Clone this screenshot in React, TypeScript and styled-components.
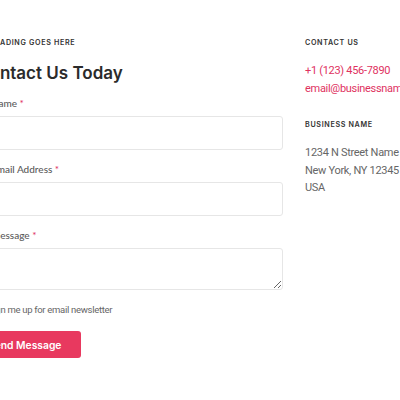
import React from "react";
import styled, { createGlobalStyle } from "styled-components";

const Global = createGlobalStyle`
  html, body { margin: 0; padding: 0; background: #fff; }
  body { font-family: "Lato", "Open Sans", sans-serif; overflow: hidden; }
  * { box-sizing: border-box; }
`;

const bodyFont = `"Roboto", "Lato", sans-serif`;
const headFont = `"Inter", "DejaVu Sans", sans-serif`;

const Page = styled.div`
  display: flex;
  gap: 22px;
  width: 460px;
  margin-left: -11px;
  padding-top: 38px;
`;

const FormColumn = styled.div`
  width: 294px;
  flex-shrink: 0;
  display: flex;
  flex-direction: column;
`;

const SideColumn = styled.div`
  flex: 1;
  display: flex;
  flex-direction: column;
`;

const Eyebrow = styled.div`
  font-family: ${headFont};
  font-size: 7.2px;
  font-weight: 600;
  letter-spacing: 0.65px;
  text-transform: uppercase;
  color: #333;
  line-height: 10px;
`;

const Title = styled.h1`
  margin: 13px 0 0 -12px;
  font-family: ${headFont};
  font-size: 17px;
  font-weight: 600;
  color: #2b2b2b;
  line-height: 24px;
`;

const Field = styled.div<{ $top: number }>`
  display: flex;
  flex-direction: column;
  gap: 7px;
  margin-top: ${(p) => p.$top}px;
`;

const Label = styled.label`
  font-family: "Lato", sans-serif;
  font-size: 10px;
  font-weight: 500;
  color: #5a5a5a;
  line-height: 12px;
  padding-left: 2px;
`;

const Star = styled.span`
  color: #e0325f;
`;

const Input = styled.input`
  height: 34px;
  border: 1px solid #e6e6e6;
  border-radius: 3px;
  background: #fff;
  outline: none;
`;

const TextArea = styled.textarea`
  height: 42px;
  border: 1px solid #e6e6e6;
  border-radius: 3px;
  resize: vertical;
  outline: none;
`;

const CheckRow = styled.label`
  display: flex;
  align-items: center;
  gap: 5px;
  margin: 13px 0 0 -17px;
  font-family: ${bodyFont};
  font-size: 9.5px;
  letter-spacing: -0.3px;
  color: #666;
  line-height: 14px;
`;

const Box = styled.input`
  margin: 0;
  width: 11px;
  height: 11px;
`;

const Button = styled.button`
  align-self: flex-start;
  margin: 14px 0 0 -22px;
  height: 27px;
  padding: 0 20px 0 21px;
  border: none;
  border-radius: 3px;
  background: #e8395f;
  color: #fff;
  font-family: ${headFont};
  font-size: 10.3px;
  font-weight: 600;
`;

const SideBlock = styled.div`
  display: flex;
  flex-direction: column;
  margin-bottom: 23px;
`;

const SideLines = styled.div<{ $pink?: boolean }>`
  margin-top: 14px;
  display: flex;
  flex-direction: column;
  font-family: ${bodyFont};
  font-size: 11px;
  letter-spacing: -0.3px;
  line-height: 17.5px;
  color: ${(p) => (p.$pink ? "#e0325f" : "#666")};
  white-space: nowrap;
`;

export default function App() {
  return (
    <>
      <Global />
      <Page>
        <FormColumn>
          <Eyebrow>Heading goes here</Eyebrow>
          <Title>Contact Us Today</Title>
          <Field $top={12}>
            <Label>Name <Star>*</Star></Label>
            <Input type="text" />
          </Field>
          <Field $top={13}>
            <Label>Email Address <Star>*</Star></Label>
            <Input type="email" />
          </Field>
          <Field $top={13}>
            <Label>Message <Star>*</Star></Label>
            <TextArea />
          </Field>
          <CheckRow>
            <Box type="checkbox" />
            Sign me up for email newsletter
          </CheckRow>
          <Button>Send Message</Button>
        </FormColumn>
        <SideColumn>
          <SideBlock>
            <Eyebrow>Contact Us</Eyebrow>
            <SideLines $pink>
              <span>+1 (123) 456-7890</span>
              <span>email@businessname.com</span>
            </SideLines>
          </SideBlock>
          <SideBlock>
            <Eyebrow>Business Name</Eyebrow>
            <SideLines>
              <span>1234 N Street Name</span>
              <span>New York, NY 12345</span>
              <span>USA</span>
            </SideLines>
          </SideBlock>
        </SideColumn>
      </Page>
    </>
  );
}
